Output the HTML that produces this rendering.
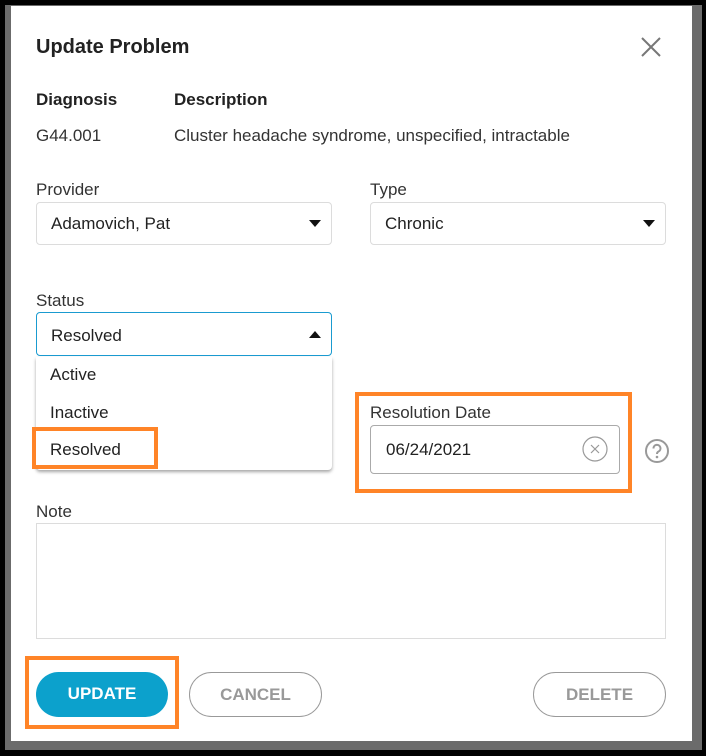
<!DOCTYPE html><html><head><style>
body{margin:0;width:706px;height:756px;background:#000;position:relative;overflow:hidden;font-family:"Liberation Sans",sans-serif;color:#222}
.a{position:absolute}
.t{position:absolute;font-size:17px;line-height:20px;white-space:nowrap}
.box{position:absolute;background:#fff;border:1px solid #dcdcdc;border-radius:4px;box-sizing:border-box}
.btn{position:absolute;box-sizing:border-box;border-radius:23px;font-weight:bold;font-size:17px;text-align:center;line-height:44px}
.or{position:absolute;border:4px solid #ff8427;box-sizing:border-box}
.tri{position:absolute;width:0;height:0;border-left:6px solid transparent;border-right:6px solid transparent}
</style></head><body>
<div class="a" style="left:5px;top:5px;width:697px;height:745px;background:#6b6b6b"></div>
<div class="a" style="left:11px;top:6px;width:681px;height:735px;background:#fff"></div>
<div class="t" style="left:36px;top:37px;font-size:20px;font-weight:bold">Update Problem</div>
<svg class="a" style="left:640px;top:36px" width="22" height="22"><path d="M2 2L20 20M20 2L2 20" stroke="#777" stroke-width="2"/></svg>
<div class="t" style="left:36px;top:90px;font-weight:bold">Diagnosis</div>
<div class="t" style="left:174px;top:90px;font-weight:bold">Description</div>
<div class="t" style="left:36px;top:126px;color:#333">G44.001</div>
<div class="t" style="left:174px;top:126px;color:#333">Cluster headache syndrome, unspecified, intractable</div>
<div class="t" style="left:36px;top:180px;color:#333">Provider</div>
<div class="box" style="left:36px;top:202px;width:296px;height:43px"></div>
<div class="t" style="left:51px;top:214px">Adamovich, Pat</div>
<div class="tri" style="left:309px;top:220px;border-top:7px solid #111"></div>
<div class="t" style="left:370px;top:180px;color:#333">Type</div>
<div class="box" style="left:370px;top:202px;width:296px;height:43px"></div>
<div class="t" style="left:385px;top:214px">Chronic</div>
<div class="tri" style="left:643px;top:220px;border-top:7px solid #111"></div>
<div class="t" style="left:36px;top:291px;color:#333">Status</div>
<div class="box" style="left:36px;top:312px;width:296px;height:44px;border-color:#1a9bd0"></div>
<div class="t" style="left:51px;top:326px">Resolved</div>
<div class="tri" style="left:309px;top:331px;border-bottom:7px solid #111"></div>
<div class="a" style="left:36px;top:357px;width:296px;height:113px;background:#fff;box-shadow:0 2px 3px rgba(0,0,0,.35);border-radius:0 0 4px 4px"></div>
<div class="t" style="left:50px;top:365px">Active</div>
<div class="t" style="left:50px;top:403px">Inactive</div>
<div class="t" style="left:50px;top:440px">Resolved</div>
<div class="or" style="left:32px;top:427px;width:126px;height:42px"></div>
<div class="t" style="left:370px;top:403px;color:#333">Resolution Date</div>
<div class="box" style="left:370px;top:425px;width:250px;height:49px;border-color:#aaa"></div>
<div class="t" style="left:386px;top:440px">06/24/2021</div>
<svg class="a" style="left:582px;top:436px" width="26" height="26"><circle cx="13" cy="13" r="12" fill="none" stroke="#999" stroke-width="1.2"/><path d="M9 9L17 17M17 9L9 17" stroke="#999" stroke-width="1.2"/></svg>
<svg class="a" style="left:644px;top:438px" width="26" height="26"><circle cx="13" cy="13" r="11" fill="none" stroke="#999" stroke-width="2"/><path d="M9.5 10.5a3.5 3.5 0 1 1 5 3c-1.2.6-1.5 1.3-1.5 2.5" fill="none" stroke="#999" stroke-width="2"/><circle cx="13" cy="19" r="1.3" fill="#999"/></svg>
<div class="or" style="left:355px;top:392px;width:277px;height:101px"></div>
<div class="t" style="left:36px;top:502px;color:#333">Note</div>
<div class="box" style="left:36px;top:523px;width:630px;height:116px;border-radius:0"></div>
<div class="btn" style="left:36px;top:672px;width:132px;height:45px;background:#0ca1cc;color:#fff">UPDATE</div>
<div class="or" style="left:25px;top:656px;width:154px;height:73px"></div>
<div class="btn" style="left:189px;top:672px;width:133px;height:45px;border:1px solid #999;color:#999">CANCEL</div>
<div class="btn" style="left:533px;top:672px;width:133px;height:45px;border:1px solid #999;color:#999">DELETE</div>
</body></html>
